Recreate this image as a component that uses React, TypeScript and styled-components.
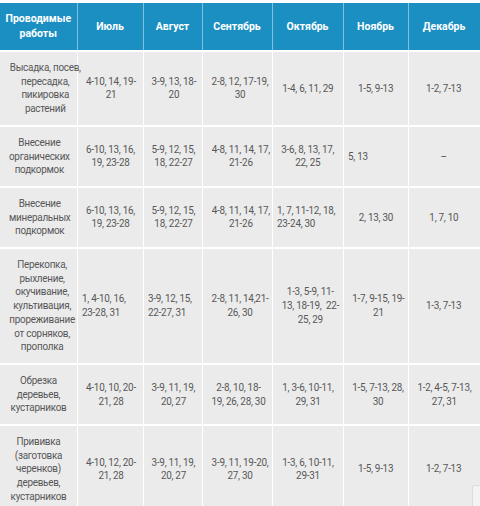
import styled, { createGlobalStyle } from "styled-components";

const GlobalStyle = createGlobalStyle`
  body {
    margin: 0;
    background: #ffffff;
  }
`;

const Page = styled.div`
  position: relative;
  width: 480px;
  height: 506px;
  overflow: hidden;
  padding-top: 3px;
  box-sizing: border-box;
`;

const Table = styled.table`
  width: 480px;
  table-layout: fixed;
  border-collapse: collapse;
  font-family: Roboto, "Liberation Sans", sans-serif;
`;

const HeadCell = styled.th`
  background: #1b8fc2;
  color: #ffffff;
  font-weight: 700;
  font-size: 10.5px;
  line-height: 15px;
  padding: 8px 2px 9px;
  text-align: center;
  vertical-align: middle;
  white-space: nowrap;
  border-left: 1px solid rgba(255, 255, 255, 0.45);
  border-right: 1px solid rgba(255, 255, 255, 0.45);
  &:first-child {
    border-left: none;
  }
`;

const Cell = styled.td<{ $align?: "left" | "center" }>`
  background: #ebebeb;
  color: #575757;
  font-size: 11.5px;
  letter-spacing: -0.3px;
  line-height: 13.7px;
  padding: 9px 4px;
  white-space: nowrap;
  text-align: ${(p) => p.$align ?? "center"};
  vertical-align: middle;
  border: 1px solid #ffffff;
  border-top-width: 2px;
  &:first-child {
    border-left: none;
  }
`;

/* the source table uses a narrow face; squeeze the text to its width */
const CellText = styled.span<{ $align?: "left" | "center" }>`
  display: inline-block;
  transform: scaleX(0.86);
  transform-origin: ${(p) => (p.$align === "left" ? "left" : "center")} center;
`;

const ScrollButton = styled.div`
  position: absolute;
  left: 472px;
  top: 485px;
  width: 24px;
  height: 30px;
  background: #f3f3f3;
  border: 1px solid #dcdcdc;
  border-radius: 2px;
`;

type CellData = { lines: string[]; align?: "left" | "center" };

const months = ["Июль", "Август", "Сентябрь", "Октябрь", "Ноябрь", "Декабрь"];
const widths = [77, 66, 59, 70, 71, 65, 72];

const c = (...lines: string[]): CellData => ({ lines });
const l = (...lines: string[]): CellData => ({ lines, align: "left" });

const rows: CellData[][] = [
  [
    c("Высадка, посев,", "пересадка,", "пикировка", "растений"),
    c("4-10, 14, 19-", "21"),
    c("3-9, 13, 18-", "20"),
    c("2-8, 12, 17-19,", "30"),
    c("1-4, 6, 11, 29"),
    c("1-5, 9-13"),
    c("1-2, 7-13"),
  ],
  [
    c("Внесение", "органических", "подкормок"),
    c("6-10, 13, 16,", "19, 23-28"),
    c("5-9, 12, 15,", "18, 22-27"),
    c("4-8, 11, 14, 17,", "21-26"),
    c("3-6, 8, 13, 17,", "22, 25"),
    l("5, 13"),
    c("–"),
  ],
  [
    c("Внесение", "минеральных", "подкормок"),
    c("6-10, 13, 16,", "19, 23-28"),
    c("5-9, 12, 15,", "18, 22-27"),
    c("4-8, 11, 14, 17,", "21-26"),
    l("1, 7, 11-12, 18,", "23-24, 30"),
    c("2, 13, 30"),
    c("1, 7, 10"),
  ],
  [
    c(
      "Перекопка,",
      "рыхление,",
      "окучивание,",
      "культивация,",
      "прореживание",
      "от сорняков,",
      "прополка"
    ),
    l("1, 4-10, 16,", "23-28, 31"),
    l("3-9, 12, 15,", "22-27, 31"),
    c("2-8, 11, 14,21-", "26, 30"),
    c("1-3, 5-9, 11-", "13, 18-19,  22-", "25, 29"),
    c("1-7, 9-15, 19-", "21"),
    c("1-3, 7-13"),
  ],
  [
    c("Обрезка", "деревьев,", "кустарников"),
    c("4-10, 10, 20-", "21, 28"),
    c("3-9, 11, 19,", "20, 27"),
    c("2-8, 10, 18-", "19, 26, 28, 30"),
    c("1, 3-6, 10-11,", "29, 31"),
    c("1-5, 7-13, 28,", "30"),
    c("1-2, 4-5, 7-13,", "27, 31"),
  ],
  [
    c("Прививка", "(заготовка", "черенков)", "деревьев,", "кустарников"),
    c("4-10, 12, 20-", "21, 28"),
    c("3-9, 11, 19,", "20, 27"),
    c("3-9, 11, 19-20,", "27, 30"),
    c("1-3, 6, 10-11,", "29-31"),
    c("1-5, 9-13"),
    c("1-2, 7-13"),
  ],
];

const Lines = ({ lines }: { lines: string[] }) => (
  <>
    {lines.map((line, i) => (
      <span key={i}>
        {i > 0 && <br />}
        {line.replace(/  /g, "\u00a0 ")}
      </span>
    ))}
  </>
);

export default function App() {
  return (
    <Page>
      <GlobalStyle />
      <Table>
        <colgroup>
          {widths.map((w, i) => (
            <col key={i} style={{ width: w }} />
          ))}
        </colgroup>
        <thead>
          <tr>
            <HeadCell>
              Проводимые
              <br />
              работы
            </HeadCell>
            {months.map((m) => (
              <HeadCell key={m}>{m}</HeadCell>
            ))}
          </tr>
        </thead>
        <tbody>
          {rows.map((row, ri) => (
            <tr key={ri}>
              {row.map((cell, ci) => (
                <Cell key={ci} $align={cell.align}>
                  <CellText $align={cell.align}>
                    <Lines lines={cell.lines} />
                  </CellText>
                </Cell>
              ))}
            </tr>
          ))}
        </tbody>
      </Table>
      <ScrollButton />
    </Page>
  );
}
